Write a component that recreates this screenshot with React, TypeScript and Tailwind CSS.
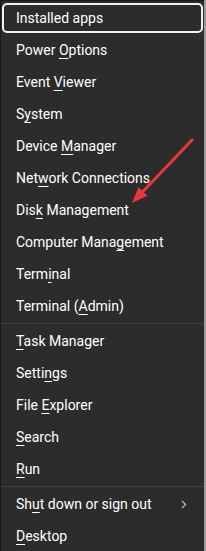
type Item = { label: string; key?: number; sub?: boolean }

const groups: Item[][] = [
  [
    { label: 'Installed apps' },
    { label: 'Power Options', key: 6 },
    { label: 'Event Viewer', key: 6 },
    { label: 'System', key: 1 },
    { label: 'Device Manager', key: 7 },
    { label: 'Network Connections', key: 3 },
    { label: 'Disk Management', key: 3 },
    { label: 'Computer Management', key: 13 },
    { label: 'Terminal', key: 4 },
    { label: 'Terminal (Admin)', key: 10 },
  ],
  [
    { label: 'Task Manager', key: 0 },
    { label: 'Settings', key: 5 },
    { label: 'File Explorer', key: 5 },
    { label: 'Search', key: 0 },
    { label: 'Run', key: 0 },
  ],
  [
    { label: 'Shut down or sign out', key: 2, sub: true },
    { label: 'Desktop', key: 0 },
  ],
]

function Label({ item }: { item: Item }) {
  if (item.key === undefined) return <span>{item.label}</span>
  const k = item.key
  return (
    <span>
      {item.label.slice(0, k)}
      <span className="underline decoration-1 underline-offset-[3px]">{item.label[k]}</span>
      {item.label.slice(k + 1)}
    </span>
  )
}

function Row({ item, focused }: { item: Item; focused?: boolean }) {
  if (focused) {
    return (
      <div className="h-8 p-[1px]">
        <div className="h-full flex items-center pl-[12px] border-2 border-[#f2f2f2] rounded-[5px]">
          <Label item={item} />
        </div>
      </div>
    )
  }
  return (
    <div className="h-8 flex items-center pl-[15px] pr-[17px]">
      <span className="flex-1">
        <Label item={item} />
      </span>
      {item.sub && (
        <svg width="6" height="9" viewBox="0 0 6 9" className="text-[#c8c8c8]">
          <path d="M1 0.8 L4.6 4.5 L1 8.2" fill="none" stroke="currentColor" strokeWidth="1.1" />
        </svg>
      )}
    </div>
  )
}

export default function App() {
  return (
    <div className="relative w-[206px] h-[551px] overflow-hidden bg-[#9a9a9a]">
      <div className="w-[204px] h-full bg-[#2c2c2c] border-t border-l border-[#1a1a1a] pt-[1px] text-white text-[14px] font-['Roboto',sans-serif]">
        {groups.map((g, gi) => (
          <div key={gi}>
            {gi > 0 && <div className="my-[1px] h-px bg-[#404040]" />}
            {g.map((item, i) => (
              <Row key={item.label} item={item} focused={gi === 0 && i === 0} />
            ))}
          </div>
        ))}
      </div>
      <svg className="absolute inset-0 pointer-events-none" width="206" height="551" viewBox="0 0 206 551">
        <line x1="192" y1="140" x2="141" y2="193.5" stroke="#e8363b" strokeWidth="3" strokeLinecap="round" />
        <polygon points="132,203 147.5,195.8 138.6,187.2" fill="#e8363b" />
      </svg>
    </div>
  )
}
